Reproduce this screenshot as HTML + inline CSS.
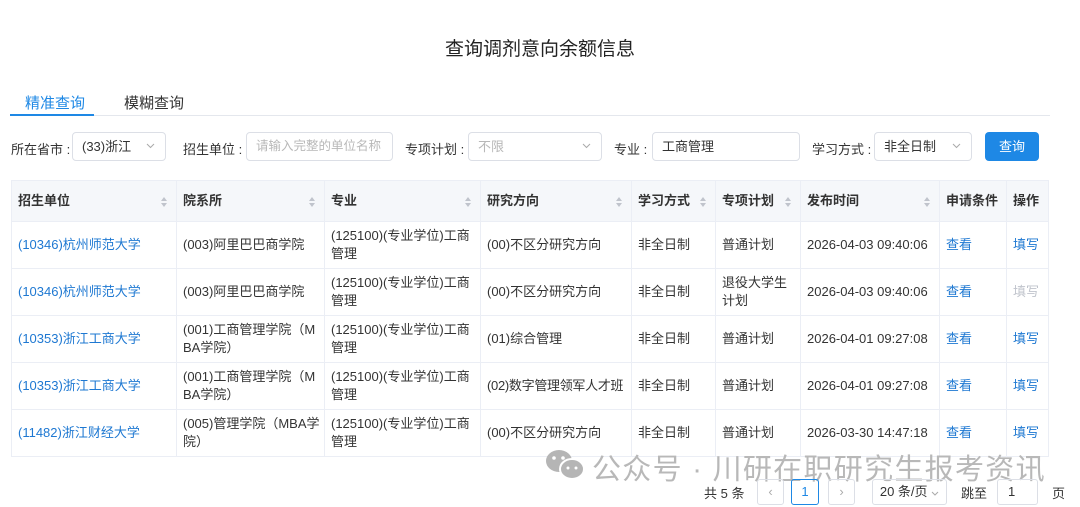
<!DOCTYPE html><html><head><meta charset="utf-8"><style>
*{box-sizing:border-box;margin:0;padding:0}
body{width:1080px;height:507px;background:#fff;font-family:"Liberation Sans","Noto Sans CJK SC",sans-serif;font-size:13px;color:#333;position:relative;overflow:hidden}
.a{position:absolute;white-space:nowrap}
.title{left:0;width:1080px;top:34px;text-align:center;font-size:19px;color:#222}
.inp{position:absolute;height:29px;border:1px solid #dcdfe6;border-radius:4px;top:132px;line-height:27px;padding-left:9px;font-size:13px;color:#333;white-space:nowrap;overflow:hidden}
.ph{color:#b8b8b8}
.car{position:absolute;right:10px;top:10px}
.lbl{position:absolute;top:139px;font-size:13px;color:#333;white-space:nowrap}
table{position:absolute;left:11px;top:180px;width:1037px;border-collapse:collapse;table-layout:fixed}
td,th{border:1px solid #ebeef5;padding:0 6px;text-align:left;vertical-align:middle;font-size:13px;line-height:18px;white-space:nowrap}
td.w{white-space:normal}
th{height:41px;background:#f5f7fa;font-weight:bold;color:#333;position:relative}
td{height:47px}
.s::after{content:"";position:absolute;right:9px;top:16px;width:0;height:0;border:3px solid transparent;border-bottom:4px solid #c0c4cc;border-top:0}
.s::before{content:"";position:absolute;right:9px;top:22px;width:0;height:0;border:3px solid transparent;border-top:4px solid #c0c4cc;border-bottom:0}
.l{color:#1e78d2}
.g{color:#c0c4cc}
.pg{position:absolute;top:479px;height:26px;border:1px solid #dcdfe6;border-radius:3px;line-height:24px;text-align:center;color:#aaa}
</style></head><body>
<div class="a title">查询调剂意向余额信息</div>
<div class="a" style="left:25px;top:92px;font-size:15px;color:#1e88e5">精准查询</div>
<div class="a" style="left:124px;top:92px;font-size:15px;color:#333">模糊查询</div>
<div class="a" style="left:10px;top:115px;width:1040px;height:1px;background:#e4e7ed"></div>
<div class="a" style="left:10px;top:114px;width:84px;height:2px;background:#1e88e5"></div>
<div class="lbl" style="left:11px">所在省市 :</div>
<div class="inp" style="left:72px;width:94px">(33)浙江<svg class="car" width="9" height="6"><path d="M1 1l3.5 3.5L8 1" stroke="#aaa" fill="none"/></svg></div>
<div class="lbl" style="left:183px">招生单位 :</div>
<div class="inp ph" style="left:246px;width:147px;font-size:12.5px">请输入完整的单位名称</div>
<div class="lbl" style="left:405px">专项计划 :</div>
<div class="inp ph" style="left:468px;width:134px">不限<svg class="car" width="9" height="6"><path d="M1 1l3.5 3.5L8 1" stroke="#aaa" fill="none"/></svg></div>
<div class="lbl" style="left:614px">专业 :</div>
<div class="inp" style="left:652px;width:148px">工商管理</div>
<div class="lbl" style="left:812px">学习方式 :</div>
<div class="inp" style="left:874px;width:98px">非全日制<svg class="car" width="9" height="6"><path d="M1 1l3.5 3.5L8 1" stroke="#aaa" fill="none"/></svg></div>
<div class="a" style="left:985px;top:132px;width:54px;height:29px;background:#1e88e5;border-radius:4px;color:#fff;text-align:center;line-height:29px">查询</div>
<table>
<colgroup><col style="width:165px"><col style="width:148px"><col style="width:156px"><col style="width:151px"><col style="width:84px"><col style="width:85px"><col style="width:139px"><col style="width:67px"><col style="width:42px"></colgroup>
<tr><th class="s">招生单位</th><th class="s">院系所</th><th class="s">专业</th><th class="s">研究方向</th><th class="s">学习方式</th><th class="s">专项计划</th><th class="s">发布时间</th><th>申请条件</th><th>操作</th></tr>
<tr><td class="l">(10346)杭州师范大学</td><td>(003)阿里巴巴商学院</td><td>(125100)(专业学位)工商<br>管理</td><td>(00)不区分研究方向</td><td>非全日制</td><td>普通计划</td><td>2026-04-03 09:40:06</td><td class="l">查看</td><td class="l">填写</td></tr>
<tr><td class="l">(10346)杭州师范大学</td><td>(003)阿里巴巴商学院</td><td>(125100)(专业学位)工商<br>管理</td><td>(00)不区分研究方向</td><td>非全日制</td><td>退役大学生<br>计划</td><td>2026-04-03 09:40:06</td><td class="l">查看</td><td class="g">填写</td></tr>
<tr><td class="l">(10353)浙江工商大学</td><td>(001)工商管理学院（M<br>BA学院）</td><td>(125100)(专业学位)工商<br>管理</td><td>(01)综合管理</td><td>非全日制</td><td>普通计划</td><td>2026-04-01 09:27:08</td><td class="l">查看</td><td class="l">填写</td></tr>
<tr><td class="l">(10353)浙江工商大学</td><td>(001)工商管理学院（M<br>BA学院）</td><td>(125100)(专业学位)工商<br>管理</td><td style="letter-spacing:-0.3px">(02)数字管理领军人才班</td><td>非全日制</td><td>普通计划</td><td>2026-04-01 09:27:08</td><td class="l">查看</td><td class="l">填写</td></tr>
<tr><td class="l">(11482)浙江财经大学</td><td>(005)管理学院（MBA学<br>院）</td><td>(125100)(专业学位)工商<br>管理</td><td>(00)不区分研究方向</td><td>非全日制</td><td>普通计划</td><td>2026-03-30 14:47:18</td><td class="l">查看</td><td class="l">填写</td></tr>
</table>
<svg class="a" style="left:545px;top:449px" width="40" height="32" viewBox="0 0 40 32"><ellipse cx="14" cy="12" rx="13" ry="11" fill="#b5b5b5"/><ellipse cx="27" cy="20" rx="12" ry="10" fill="#b5b5b5" stroke="#fff" stroke-width="2"/><circle cx="9" cy="9" r="1.8" fill="#fff"/><circle cx="18" cy="9" r="1.8" fill="#fff"/><circle cx="23" cy="19" r="1.5" fill="#fff"/><circle cx="31" cy="19" r="1.5" fill="#fff"/></svg>
<div class="a" style="left:592px;top:446px;font-size:29px;color:#b8b8b8;letter-spacing:1.3px">公众号 · 川研在职研究生报考资讯</div>
<div class="a" style="left:704px;top:483px;color:#333">共 5 条</div>
<div class="pg" style="left:757px;width:27px">‹</div>
<div class="pg" style="left:791px;width:28px;border-color:#1e88e5;color:#1e88e5">1</div>
<div class="pg" style="left:828px;width:27px">›</div>
<div class="pg" style="left:872px;width:75px;color:#333">20 条/页 <svg width="8" height="5"><path d="M1 1l3 3 3-3" stroke="#aaa" fill="none"/></svg></div>
<div class="a" style="left:961px;top:483px;color:#333">跳至</div>
<div class="pg" style="left:997px;width:41px;text-align:left;padding-left:10px;color:#333">1</div>
<div class="a" style="left:1052px;top:483px;color:#333">页</div>
</body></html>
